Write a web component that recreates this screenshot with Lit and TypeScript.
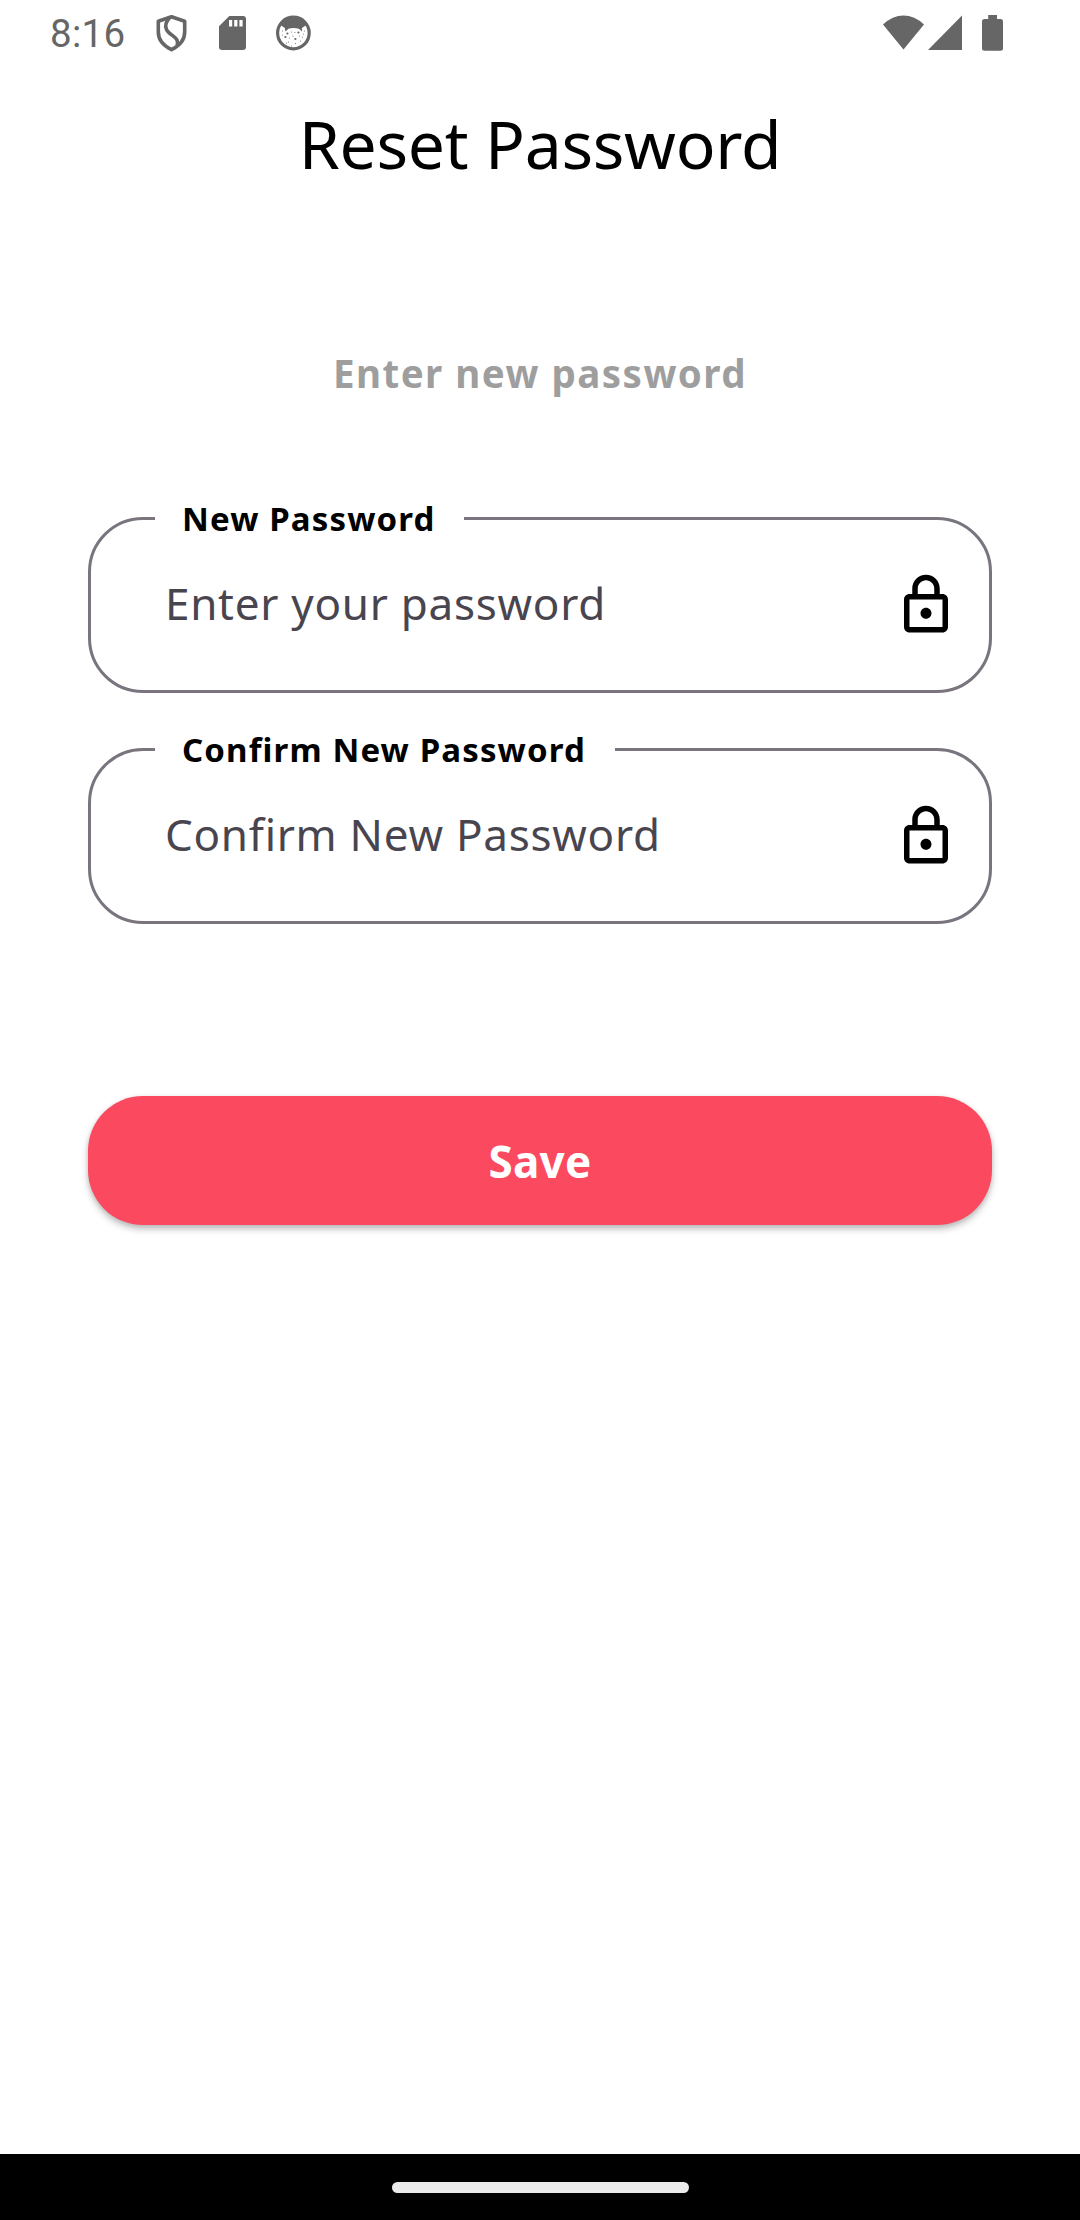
import { LitElement, html, css, svg } from "lit";
import { customElement, property } from "lit/decorators.js";

@customElement("status-bar")
class StatusBar extends LitElement {
  static styles = css`
    :host { display: block; }
    .bar {
      display: flex;
      align-items: center;
      height: 66px;
      padding: 0 77px 0 50px;
      box-sizing: border-box;
      color: #666;
      fill: #666;
    }
    .time {
      font: 400 38.5px/66px Roboto, sans-serif;
      letter-spacing: 0.3px;
      width: 76px;
      padding-top: 2px;
    }
    svg { display: block; flex: none; }
    .shield { margin-left: 29px; }
    .card { margin-left: 32px; }
    .face { margin-left: 29px; }
    .spacer { flex: 1; }
    .signal { margin-left: 3px; }
    .battery { margin-left: 20px; }
  `;
  render() {
    return html`
      <div class="bar">
        <span class="time">8:16</span>
        <svg class="shield" width="32" height="38" viewBox="0 0 32 38">
          <path d="M16.500 2.700 L29.700 7.200 V18 C29.700 26 24 32 16.500 35.600 C9 32 3.300 26 3.300 18 V7.200 Z" fill="none" stroke="#666" stroke-width="3.600" stroke-linejoin="round"/>
          <path d="M15.200 3 C11 7.500 9.700 12 11.500 15.500 C13.500 20 20 22 22 26 C22.800 28 22.600 30 22 31.500" fill="none" stroke="#666" stroke-width="3.600"/>
        </svg>
        <svg class="card" width="27" height="34" viewBox="0 0 27 34">
          <path fill-rule="evenodd" d="M10.300 0 H24 Q27 0 27 3 V31 Q27 34 24 34 H3 Q0 34 0 31 V10.200 Z M10 4 V10.500 H13.200 V4 Z M15.200 4 V10.500 H18.400 V4 Z M20.400 4 V10.500 H23.600 V4 Z"/>
        </svg>
        <svg class="face" width="36" height="36" viewBox="-0.400 0 36 36">
          <circle cx="18" cy="18" r="15.800" fill="none" stroke="#666" stroke-width="3.200"/>
          <path d="M5 10 Q10 2 18 2 Q26 2 31 10 L26.500 13 L26.600 16.500 L23.500 13.800 Q18 12.200 13 13.800 L10 16.500 L9.500 13 Z"/>
          ${[[12, 18.500], [23, 17.500], [10, 22], [20, 24], [17.500, 21], [7, 16], [29, 16], [14, 23], [27, 22], [13, 27], [20, 28.500], [25, 26], [16, 17], [7, 20], [28, 19], [16, 31], [11, 28], [24, 21], [19.500, 17.500]].map(
            ([x, y], i) => svg`<circle cx=${x} cy=${y} r=${i < 4 ? 1.1 : 0.55} />`
          )}
        </svg>
        <span class="spacer"></span>
        <svg class="wifi" width="42" height="36" viewBox="0 0 42 36">
          <path d="M0 9.500 Q9.500 0.500 20.500 0.500 Q31.500 0.500 41 9.500 L20.500 34.500 Z"/>
        </svg>
        <svg class="signal" width="34" height="36" viewBox="0 0 34 36">
          <path d="M0 35 L34 0.500 V35 Z"/>
        </svg>
        <svg class="battery" width="21" height="36" viewBox="0 0 21 36">
          <path d="M6.200 0 H15 V4 H18.500 Q21 4 21 6.500 V33.200 Q21 35.700 18.500 35.700 H2.500 Q0 35.700 0 33.200 V6.500 Q0 4 2.500 4 H6.200 Z"/>
        </svg>
      </div>
    `;
  }
}

@customElement("password-field")
class PasswordField extends LitElement {
  @property() label = "";
  @property() hint = "";
  static styles = css`
    :host { display: block; }
    .box {
      box-sizing: border-box;
      height: 197px;
      margin: 0;
      min-width: 0;
      padding: 0 30px 0 74px;
      border: 3px solid #79747e;
      border-radius: 55px;
    }
    .label {
      margin-left: -10px;
      padding: 0 29px 0 27px;
      font-size: 33px;
      font-weight: 700;
      line-height: 45px;
      letter-spacing: 1.130px;
      color: #000;
      white-space: nowrap;
    }
    .row {
      display: flex;
      align-items: center;
      justify-content: space-between;
      height: 128px;
    }
    .hint {
      font-size: 44px;
      line-height: 60px;
      letter-spacing: 0.720px;
      color: #49454f;
      white-space: nowrap;
      padding-bottom: 5px;
    }
    svg { display: block; flex: none; }
  `;
  render() {
    return html`
      <fieldset class="box">
        <legend class="label">${this.label}</legend>
        <div class="row">
          <span class="hint">${this.hint}</span>
          <svg width="66" height="66" viewBox="0 0 24 24">
            <path d="M18 8h-1V6c0-2.760-2.240-5-5-5S7 3.240 7 6v2H6c-1.100 0-2 .9-2 2v10c0 1.100.9 2 2 2h12c1.100 0 2-.9 2-2V10c0-1.100-.9-2-2-2zM9 6c0-1.660 1.340-3 3-3s3 1.340 3 3v2H9V6zm9 14H6V10h12v10zm-6-3c1.100 0 2-.9 2-2s-.9-2-2-2-2 .9-2 2 .9 2 2 2z"/>
          </svg>
        </div>
      </fieldset>
    `;
  }
}

@customElement("app-root")
class AppRoot extends LitElement {
  static styles = css`
    :host { display: block; }
    .screen {
      display: flex;
      flex-direction: column;
      height: 2220px;
      background: #fff;
      font-family: "Noto Sans", sans-serif;
    }
    .title {
      margin: 32px 0 0;
      text-align: center;
      font-size: 66px;
      font-weight: 400;
      line-height: 90px;
      letter-spacing: -0.300px;
      color: #000;
    }
    .subtitle {
      margin: 159px 0 0;
      text-align: center;
      font-size: 38.5px;
      font-weight: 700;
      line-height: 52px;
      letter-spacing: 1.480px;
      color: #9e9e9e;
    }
    .form {
      display: flex;
      flex-direction: column;
      gap: 34px;
      margin: 97px 88px 0;
    }
    .save {
      margin: 172px 88px 0;
      height: 129px;
      padding: 0;
      border: 0;
      border-radius: 55px;
      background: #fb495f;
      color: #fff;
      font: 700 44px/60px "Noto Sans", sans-serif;
      letter-spacing: 0.300px;
      box-shadow: 0 4px 7px rgba(0, 0, 0, 0.25), 0 1px 4px rgba(0, 0, 0, 0.08);
    }
    .nav {
      display: flex;
      align-items: center;
      justify-content: center;
      height: 66px;
      margin-top: auto;
      background: #000;
    }
    .handle {
      width: 297px;
      height: 11px;
      border-radius: 6px;
      background: #ebebeb;
    }
  `;
  render() {
    return html`
      <main class="screen">
        <status-bar></status-bar>
        <h1 class="title">Reset Password</h1>
        <p class="subtitle">Enter new password</p>
        <div class="form">
          <password-field label="New Password" hint="Enter your password"></password-field>
          <password-field label="Confirm New Password" hint="Confirm New Password"></password-field>
        </div>
        <button class="save">Save</button>
        <div class="nav"><div class="handle"></div></div>
      </main>
    `;
  }
}
